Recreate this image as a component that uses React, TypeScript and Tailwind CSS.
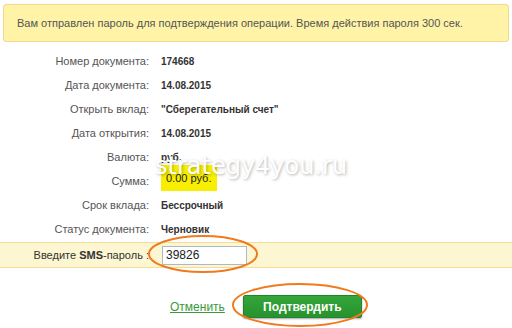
const rows: [string, string][] = [
  ["Номер документа:", "174668"],
  ["Дата документа:", "14.08.2015"],
  ["Открыть вклад:", "\"Сберегательный счет\""],
  ["Дата открытия:", "14.08.2015"],
  ["Валюта:", "руб."],
  ["Сумма:", ""],
  ["Срок вклада:", "Бессрочный"],
  ["Статус документа:", "Черновик"],
];

export default function App() {
  return (
    <div className="relative w-[512px] h-[328px] overflow-hidden bg-white font-['Liberation_Sans',Arial,sans-serif]">
      {/* уведомление про пароль */}
      <div className="mx-[3px] mt-[4px] flex h-[38px] items-center rounded-[3px] border border-[#f3d98c] bg-[#fef3a6] px-[13px] text-[11px] text-[#555]">
        Вам отправлен пароль для подтверждения операции. Время действия пароля 300 сек.
      </div>

      <div className="mt-[7px]">
        {rows.map(([label, value]) => (
          <div key={label} className="flex h-[24px] items-center">
            <div className="w-[149px] text-right text-[11px] text-[#555]">{label}</div>
            <div className="ml-[12px] text-[10px] font-bold text-[#333]">
              {label === "Сумма:" ? (
                <span className="relative -top-[3px] inline-block bg-[#f7ee00] pl-[5px] pr-[6px] py-[5px] text-[11px] font-normal text-[#222]">
                  0.00 руб.
                </span>
              ) : (
                value
              )}
            </div>
          </div>
        ))}
      </div>

      {/* SMS */}
      <div className="mt-[1px] flex h-[26px] items-center border-y border-[#f6dc93] bg-[#fcf6d2]">
        <div className="w-[149px] text-right text-[11px] text-[#333]">
          Введите <b>SMS</b>-пароль :
        </div>
        <input
          readOnly
          value="39826"
          className="ml-[13px] h-[19px] w-[85px] border border-[#a9b9c9] bg-white px-[3px] text-[12px] text-[#222] outline-none"
        />
      </div>

      <div className="mt-[27px] flex items-center pl-[170px]">
        <a href="#" className="text-[12px] text-[#3a9a3c] underline">
          Отменить
        </a>
        <button className="ml-[18px] h-[23px] w-[119px] rounded-[2px] border border-[#21852a] bg-gradient-to-b from-[#34a63a] to-[#27922e] text-[12px] font-bold text-white shadow-[0_1px_2px_rgba(0,0,0,0.35)]">
          Подтвердить
        </button>
      </div>

      {/* водяной знак */}
      <div className="pointer-events-none absolute left-[155px] top-[152px] font-['DejaVu_Sans',Verdana,sans-serif] text-[24px] leading-[28px] text-white [text-shadow:1px_1px_3px_rgba(0,0,0,0.3)]">
        strategy4you.ru
      </div>

      <svg className="pointer-events-none absolute left-0 top-0" width="512" height="328">
        <ellipse cx="203" cy="254" rx="54" ry="18" fill="none" stroke="#f07a1e" strokeWidth="2" />
        <ellipse cx="300" cy="305" rx="67" ry="21" fill="none" stroke="#f07a1e" strokeWidth="2" />
      </svg>
    </div>
  );
}
